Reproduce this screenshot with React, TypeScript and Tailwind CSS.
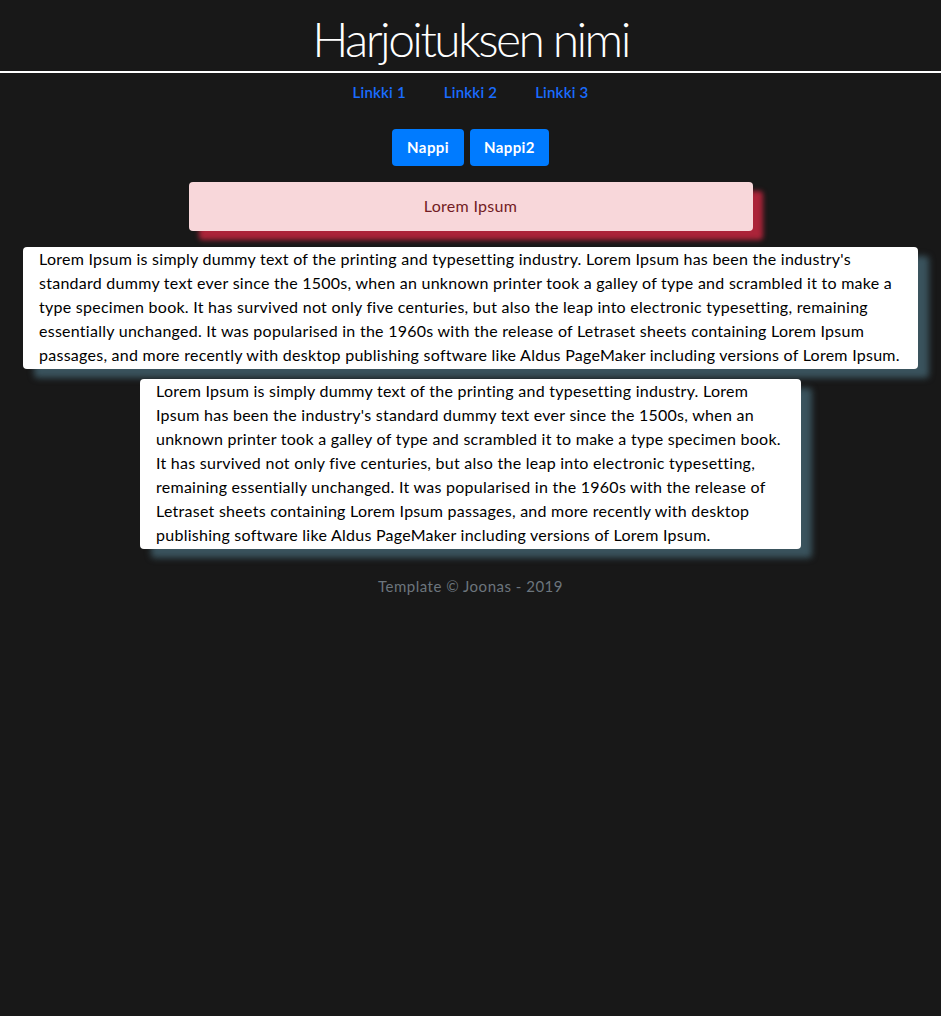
const body = "font-['Lato','Liberation_Sans',sans-serif]";

const wideLines = [
  "Lorem Ipsum is simply dummy text of the printing and typesetting industry. Lorem Ipsum has been the industry's",
  "standard dummy text ever since the 1500s, when an unknown printer took a galley of type and scrambled it to make a",
  "type specimen book. It has survived not only five centuries, but also the leap into electronic typesetting, remaining",
  "essentially unchanged. It was popularised in the 1960s with the release of Letraset sheets containing Lorem Ipsum",
  "passages, and more recently with desktop publishing software like Aldus PageMaker including versions of Lorem Ipsum.",
];

const narrowLines = [
  "Lorem Ipsum is simply dummy text of the printing and typesetting industry. Lorem",
  "Ipsum has been the industry's standard dummy text ever since the 1500s, when an",
  "unknown printer took a galley of type and scrambled it to make a type specimen book.",
  "It has survived not only five centuries, but also the leap into electronic typesetting,",
  "remaining essentially unchanged. It was popularised in the 1960s with the release of",
  "Letraset sheets containing Lorem Ipsum passages, and more recently with desktop",
  "publishing software like Aldus PageMaker including versions of Lorem Ipsum.",
];

function Card({ lines, className }: { lines: string[]; className: string }) {
  return (
    <div
      className={`bg-white rounded-[4px] px-4 pt-0 pb-[2px] text-black text-[16px] leading-6 tracking-[0.26px] shadow-[11px_9px_6px_#3a535d] ${className}`}
    >
      {lines.map((line, i) => (
        <span key={i} className="block whitespace-nowrap">
          {line}
        </span>
      ))}
    </div>
  );
}

export default function App() {
  return (
    <div className={`min-h-screen bg-[#181818] ${body}`}>
      <header className="h-[73px] flex items-start justify-center border-b-2 border-white">
        <h1 className="mt-[10px] text-[48px] leading-[58px] font-light text-white tracking-[-2.6px] font-['Lato',sans-serif]">
          Harjoituksen nimi
        </h1>
      </header>

      <nav className="flex justify-center gap-[38px] pt-[10px]">
        <a href="#" className="text-[15px] leading-[18px] font-semibold text-[#1a6cff] tracking-[0.2px]">Linkki 1</a>
        <a href="#" className="text-[15px] leading-[18px] font-semibold text-[#1a6cff] tracking-[0.2px]">Linkki 2</a>
        <a href="#" className="text-[15px] leading-[18px] font-semibold text-[#1a6cff] tracking-[0.2px]">Linkki 3</a>
      </nav>

      <div className="flex justify-center gap-[6px] mt-[28px]">
        <button className="h-[37px] px-[15px] rounded-[4px] bg-[#007bff] text-white text-[15px] font-bold tracking-[0.4px]">Nappi</button>
        <button className="h-[37px] px-[14px] rounded-[4px] bg-[#007bff] text-white text-[15px] font-bold tracking-[0.4px]">Nappi2</button>
      </div>

      <div className="mx-auto mt-4 w-[564px] h-[49px] flex items-center justify-center pb-[2px] rounded-[4px] bg-[#f8d7da] text-[#721c24] text-[16px] tracking-[0.3px] shadow-[10px_9px_5px_#ab2439]">
        Lorem Ipsum
      </div>

      <Card lines={wideLines} className="mt-4 mx-[23px]" />
      <Card lines={narrowLines} className="mt-[10px] mx-auto w-[661px]" />

      <footer className="mt-[25px] text-center text-[15px] leading-6 text-[#6c757d] tracking-[0.5px]">
        Template © Joonas - 2019
      </footer>
    </div>
  );
}
